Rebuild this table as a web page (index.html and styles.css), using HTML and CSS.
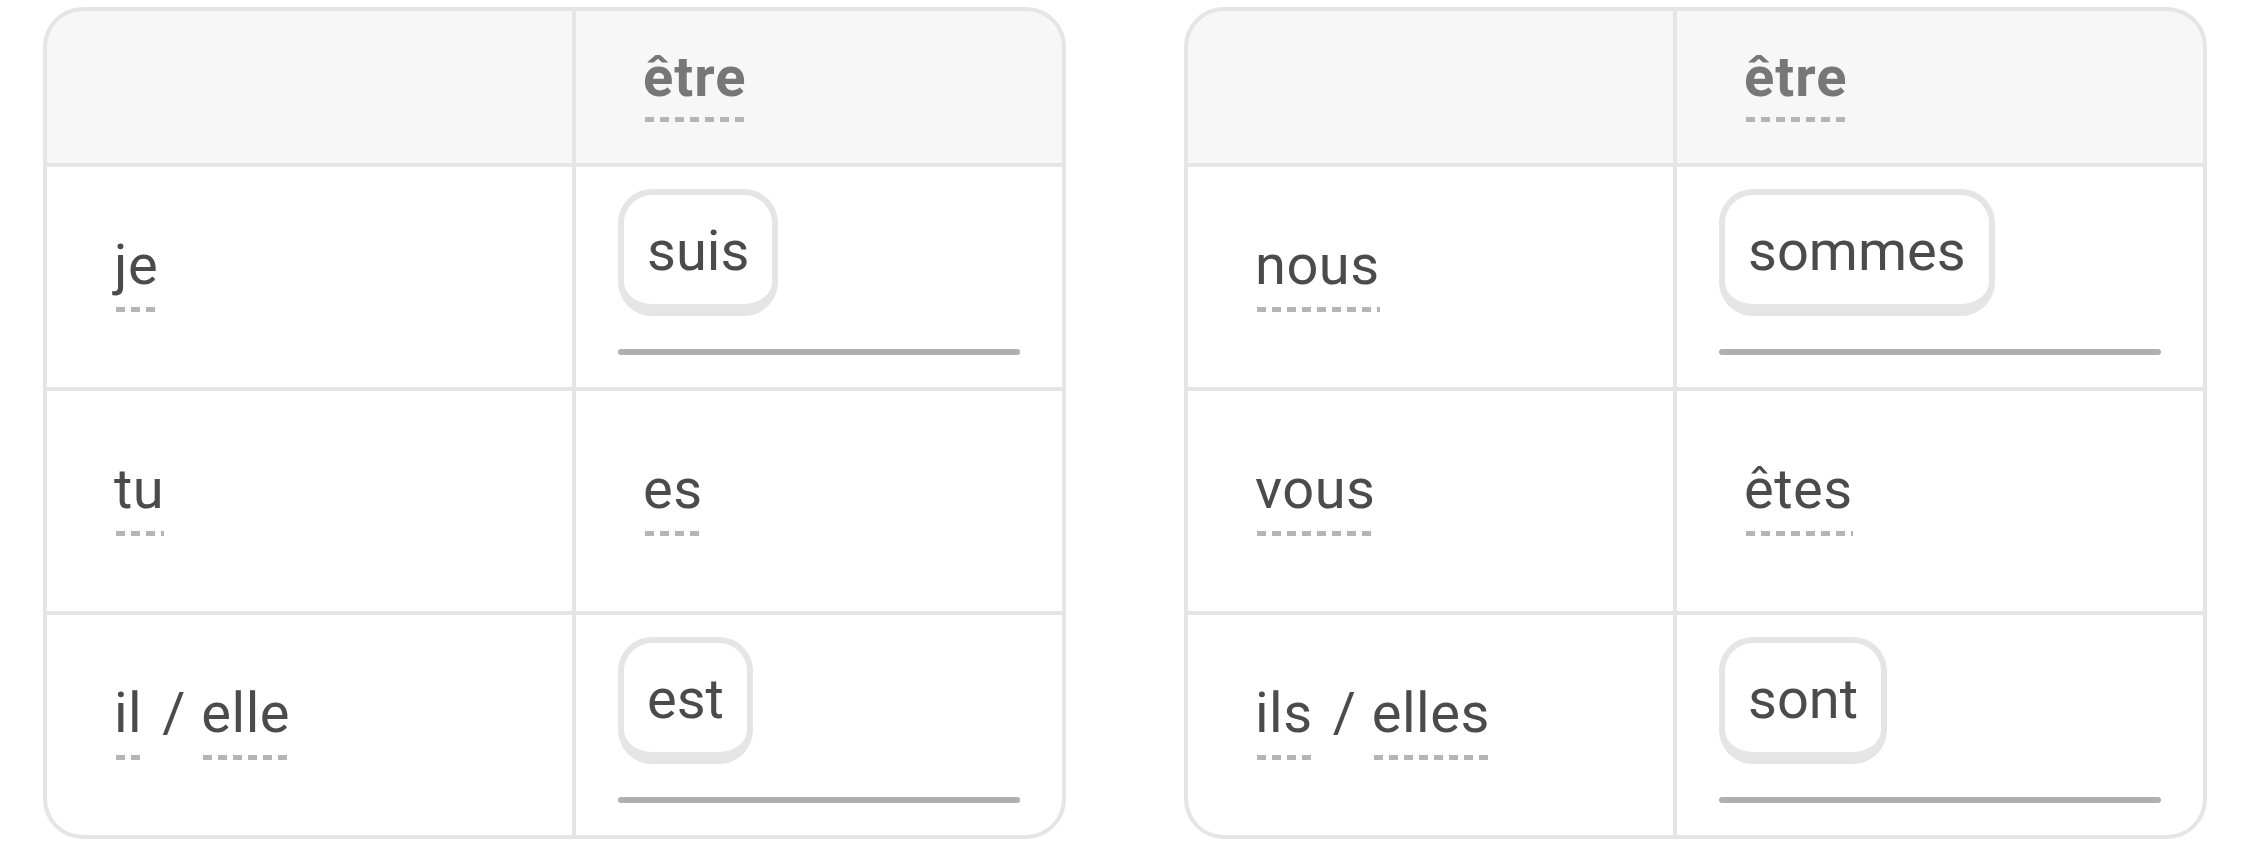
FILE: index.html
```html
<!DOCTYPE html>
<html lang="fr">
<head>
<meta charset="utf-8">
<title>être</title>
<link rel="stylesheet" href="styles.css">
</head>
<body>
<main class="page">
  <section class="conj conj--left">
    <div class="cell cell--head"></div>
    <div class="cell cell--head"><span class="word word--head">être</span></div>

    <div class="cell"><span class="word">je</span></div>
    <div class="cell cell--answer">
      <span class="chip">suis</span>
      <span class="blank"></span>
    </div>

    <div class="cell"><span class="word">tu</span></div>
    <div class="cell"><span class="word">es</span></div>

    <div class="cell"><span class="word">il</span><span class="sep">/</span><span class="word">elle</span></div>
    <div class="cell cell--answer">
      <span class="chip">est</span>
      <span class="blank"></span>
    </div>
  </section>

  <section class="conj conj--right">
    <div class="cell cell--head"></div>
    <div class="cell cell--head"><span class="word word--head">être</span></div>

    <div class="cell"><span class="word">nous</span></div>
    <div class="cell cell--answer">
      <span class="chip">sommes</span>
      <span class="blank"></span>
    </div>

    <div class="cell"><span class="word">vous</span></div>
    <div class="cell"><span class="word">êtes</span></div>

    <div class="cell"><span class="word">ils</span><span class="sep">/</span><span class="word">elles</span></div>
    <div class="cell cell--answer">
      <span class="chip">sont</span>
      <span class="blank"></span>
    </div>
  </section>
</main>
</body>
</html>
```

FILE: styles.css
```css
html, body {
  margin: 0;
  padding: 0;
  background: #ffffff;
}

body {
  font-family: Roboto, "Noto Sans", "Liberation Sans", sans-serif;
  color: #4b4b4b;
}

.page {
  display: flex;
  gap: 118px;
  padding: 7px 43px 0;
}

.conj {
  box-sizing: border-box;
  width: 1023px;
  display: grid;
  grid-template-rows: 152px 220px 220px 220px;
  gap: 4px;
  background: #e5e5e5;
  border: 4px solid #e5e5e5;
  border-radius: 40px;
  overflow: hidden;
}

.conj--left {
  grid-template-columns: 525px 486px;
}

.conj--right {
  grid-template-columns: 485px 526px;
}

.cell {
  box-sizing: border-box;
  background: #ffffff;
  display: flex;
  align-items: center;
  padding: 0 0 10px 67px;
}

.cell--head {
  background: #f7f7f7;
  padding-bottom: 8px;
}

.word {
  display: inline-block;
  font-size: 56px;
  line-height: 1.2;
  letter-spacing: 0.5px;
  padding-bottom: 12px;
  background-image: linear-gradient(to right, #b4b4b4 9px, transparent 9px);
  background-size: 15px 5px;
  background-repeat: repeat-x;
  background-position: 2px bottom;
}

.word--head {
  font-weight: 700;
  color: #777777;
  letter-spacing: 1px;
  padding-bottom: 10px;
}

.sep {
  display: inline-block;
  font-size: 56px;
  line-height: 1.2;
  padding: 0 16px 12px 20px;
}

.cell--answer {
  flex-direction: column;
  align-items: stretch;
  justify-content: center;
  gap: 33px;
  padding: 0 42px 10px;
}

.chip {
  align-self: flex-start;
  font-size: 56px;
  line-height: 1.2;
  padding: 23px 23px 18px;
  border: 6px solid #e5e5e5;
  border-bottom-width: 12px;
  border-radius: 34px;
  background: #ffffff;
}

.blank {
  display: block;
  height: 6px;
  border-radius: 3px;
  background: #afafaf;
}
```
